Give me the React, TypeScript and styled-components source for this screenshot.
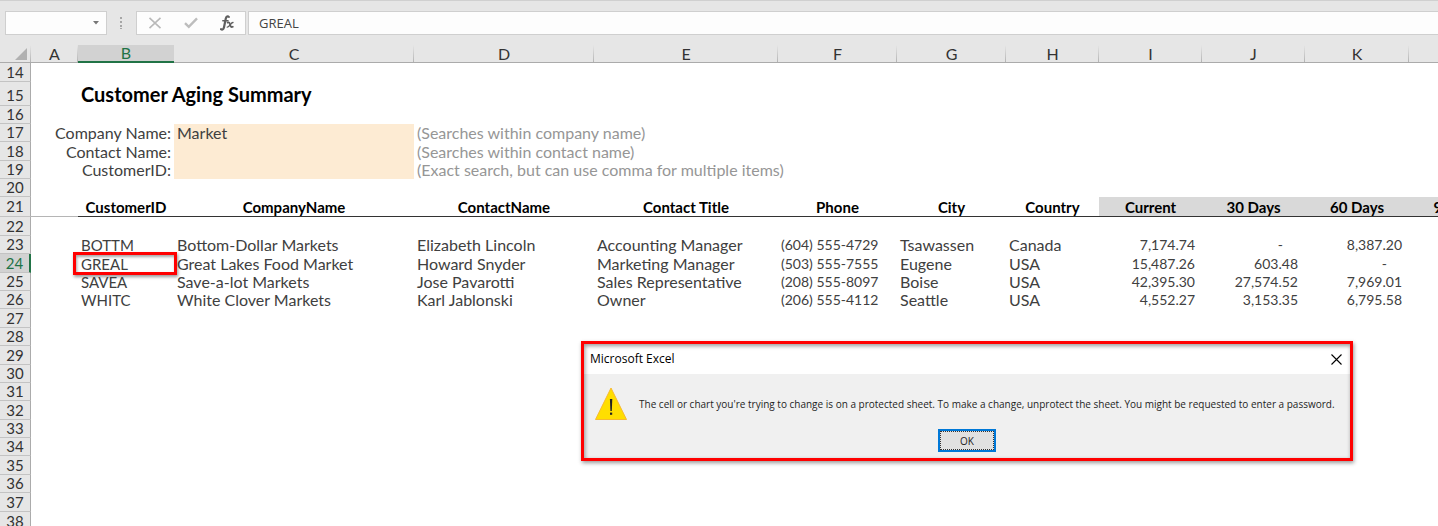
import React from "react";
import styled, { createGlobalStyle, css } from "styled-components";

const sheetFont = `"Century Gothic", Lato, "Open Sans", sans-serif`;
const uiFont = `"Segoe UI", "Open Sans", "Noto Sans", sans-serif`;

const GlobalStyle = createGlobalStyle`
  *, *::before, *::after { box-sizing: border-box; }
  body { margin: 0; background: #fff; }
`;

const Workbook = styled.main`
  display: flex;
  flex-direction: column;
  height: 100vh;
  overflow: hidden;
  background: #fff;
  font-family: ${sheetFont};
`;

const FormulaBar = styled.header`
  display: flex;
  align-items: center;
  flex: none;
  height: 45px;
  padding-left: 5px;
  background: #e6e6e6;
  border-top: 1px solid #d0d0d0;
`;

const Well = styled.div`
  display: flex;
  align-items: center;
  height: 24px;
  background: #fdfdfd;
  border: 1px solid #cfcfcf;
`;

const NameBox = styled(Well)`
  width: 102px;
`;

const BarInput = styled.input`
  flex: 1;
  min-width: 0;
  height: 22px;
  padding: 0 10px;
  border: 0;
  outline: 0;
  background: transparent;
  color: #444;
  font: 13px/20px ${uiFont};
`;

const IconButton = styled.button`
  display: flex;
  align-items: center;
  justify-content: center;
  width: 36px;
  height: 22px;
  padding: 0;
  border: 0;
  background: transparent;
`;

const NameDrop = styled(IconButton)`
  width: 20px;
`;

const Grip = styled.svg`
  width: 29px;
  height: 14px;
`;

const FormulaWell = styled(Well)`
  flex: 1;
  margin-left: 2px;
  border-right: 0;
`;

const Sheet = styled.section`
  position: relative;
  flex: 1;
`;

const Grid = styled.table`
  width: 1512px;
  table-layout: fixed;
  border-collapse: separate;
  border-spacing: 0;
  color: #404040;
  font-size: 16px;
  line-height: 18px;
`;

const Row = styled.tr<{ $h: number }>`
  height: ${(p) => p.$h}px;
`;

const ColumnHead = styled.th<{ $active?: boolean }>`
  padding: 0;
  border-bottom: 1px solid #ababab;
  background: linear-gradient(#e6e6e6, #b4b4b4) right / 1px 100% no-repeat #e6e6e6;
  color: #333;
  font-weight: 400;
  font-size: 16px;
  line-height: 16px;
  text-align: center;
  ${(p) =>
    p.$active &&
    css`
      border-bottom: 2px solid #217346;
      background: #d2d2d2;
      color: #217346;
    `}
`;

const Corner = styled(ColumnHead)`
  text-align: right;
  line-height: 0;
  padding-right: 4px;
`;

const RowHead = styled.th<{ $active?: boolean; $big?: boolean }>`
  padding: ${(p) => (p.$big ? "4px 0 0" : "0")};
  border-right: 1px solid #ababab;
  border-bottom: 1px solid #c3c3c3;
  background: #e6e6e6;
  color: #333;
  font-weight: 400;
  font-size: 15px;
  line-height: 17px;
  text-align: center;
  ${(p) =>
    p.$active &&
    css`
      border-right: 2px solid #217346;
      background: #d2d2d2;
      color: #217346;
    `}
`;

const Cell = styled.td<{ $align?: "left" | "right"; $fill?: boolean; $muted?: boolean }>`
  position: relative;
  padding: 0 3px;
  white-space: nowrap;
  text-align: ${(p) => p.$align ?? "left"};
  background: ${(p) => (p.$fill ? "#fdebd3" : "transparent")};
  color: ${(p) => (p.$muted ? "#969696" : "inherit")};
`;

const IdCell = styled(Cell)`
  font-size: 15px;
`;

const Amount = styled(Cell)<{ $dash?: boolean }>`
  padding-right: ${(p) => (p.$dash ? "22px" : "7px")};
  text-align: right;
  font-size: 14px;
`;

const Phone = styled(Cell)`
  font-size: 14px;
`;

const Title = styled.h1`
  margin: 0;
  color: #000;
  font-size: 20px;
  line-height: 24px;
  font-weight: 700;
`;

const FieldHead = styled.th<{ $shaded?: boolean }>`
  padding: 0;
  border-bottom: 1px solid #333;
  background: ${(p) => (p.$shaded ? "#d9d9d9" : "transparent")};
  color: #000;
  font-size: 15px;
  line-height: 18px;
  font-weight: 700;
  white-space: nowrap;
`;

const FreezeCell = styled.td`
  padding: 0;
  border-bottom: 1px solid #b5b5b5;
`;

const Highlight = styled.span`
  position: absolute;
  inset: -2px -3px -2px -5px;
  border: 3px solid #f00;
  box-shadow: 1px 2px 3px rgba(0, 0, 0, 0.4), inset 1px 2px 3px rgba(0, 0, 0, 0.35);
`;

const Dialog = styled.div`
  position: absolute;
  top: 296px;
  left: 581px;
  width: 772px;
  border: 3px solid #f00;
  background: #f0f0f0;
  box-shadow: 1px 2px 4px rgba(0, 0, 0, 0.4);
  color: #1e1e1e;
  font-family: ${uiFont};
  &::after {
    content: "";
    position: absolute;
    inset: 0;
    box-shadow: inset 1px 2px 4px rgba(0, 0, 0, 0.4);
    pointer-events: none;
  }
`;

const DialogBar = styled.div`
  display: flex;
  align-items: center;
  justify-content: space-between;
  height: 30px;
  padding: 0 4px 0 6px;
  background: #fff;
`;

const DialogTitle = styled.h2`
  margin: 0;
  color: #000;
  font-size: 12px;
  line-height: 16px;
  font-weight: 400;
`;

const CloseButton = styled(IconButton)`
  width: 20px;
`;

const DialogBody = styled.div`
  display: flex;
  align-items: center;
  gap: 12px;
  padding: 13px 0 9px 11px;

  svg {
    flex: none;
  }
`;

const Message = styled.p`
  margin: 0;
  font-size: 10px;
  line-height: 16px;
  white-space: nowrap;
`;

const DialogActions = styled.div`
  display: flex;
  justify-content: center;
  height: 29px;
`;

const OkButton = styled.button`
  width: 58px;
  height: 23px;
  padding: 0;
  border: 2px solid #0078d7;
  outline: 1px dotted #333;
  outline-offset: -3px;
  background: #e1e1e1;
  color: #1e1e1e;
  font: 10px/16px ${uiFont};
`;

const columns = [
  { name: "A", width: 47 },
  { name: "B", width: 96 },
  { name: "C", width: 240 },
  { name: "D", width: 180 },
  { name: "E", width: 184 },
  { name: "F", width: 119 },
  { name: "G", width: 109 },
  { name: "H", width: 93 },
  { name: "I", width: 103 },
  { name: "J", width: 103 },
  { name: "K", width: 104 },
  { name: "L", width: 103 },
];

const filters = [
  { row: 17, h: 18, label: "Company Name:", value: "Market", hint: "(Searches within company name)" },
  { row: 18, h: 19, label: "Contact Name:", value: "", hint: "(Searches within contact name)" },
  { row: 19, h: 18, label: "CustomerID:", value: "", hint: "(Exact search, but can use comma for multiple items)" },
];

const fields = ["CustomerID", "CompanyName", "ContactName", "Contact Title", "Phone", "City", "Country"];
const periods = ["Current", "30 Days", "60 Days", "90 Days"];

const customers = [
  { row: 23, h: 18, id: "BOTTM", company: "Bottom-Dollar Markets", contact: "Elizabeth Lincoln", title: "Accounting Manager", phone: "(604) 555-4729", city: "Tsawassen", country: "Canada", amounts: ["7,174.74", "-", "8,387.20"] },
  { row: 24, h: 19, id: "GREAL", company: "Great Lakes Food Market", contact: "Howard Snyder", title: "Marketing Manager", phone: "(503) 555-7555", city: "Eugene", country: "USA", amounts: ["15,487.26", "603.48", "-"] },
  { row: 25, h: 18, id: "SAVEA", company: "Save-a-lot Markets", contact: "Jose Pavarotti", title: "Sales Representative", phone: "(208) 555-8097", city: "Boise", country: "USA", amounts: ["42,395.30", "27,574.52", "7,969.01"] },
  { row: 26, h: 18, id: "WHITC", company: "White Clover Markets", contact: "Karl Jablonski", title: "Owner", phone: "(206) 555-4112", city: "Seattle", country: "USA", amounts: ["4,552.27", "3,153.35", "6,795.58"] },
];

const emptyRows = [
  [27, 19], [28, 18], [29, 19], [30, 18], [31, 18], [32, 19],
  [33, 18], [34, 18], [35, 19], [36, 18], [37, 19], [38, 19],
];

const BlankRow = ({ row, h }: { row: number; h: number }) => (
  <Row $h={h}>
    <RowHead scope="row">{row}</RowHead>
    <Cell colSpan={12} />
  </Row>
);

const CancelIcon = () => (
  <svg width="14" height="12" viewBox="0 0 14 12" fill="none" stroke="#b9b9b9" strokeWidth="1.6">
    <path d="M1.5 .8 12.5 11.2M12.5 .8 1.5 11.2" />
  </svg>
);

const CheckIcon = () => (
  <svg width="14" height="12" viewBox="0 0 14 12" fill="none" stroke="#bdbdbd" strokeWidth="2.4">
    <path d="M1 6.2 4.8 9.8 13 1.4" />
  </svg>
);

const FunctionIcon = () => (
  <svg width="14" height="16" viewBox="0 0 14 16" fill="none" stroke="#5f5f5f" strokeLinecap="round">
    <path d="M8.8 1.9C7.8.7 6.3 1.3 5.8 3.6L4 12.2C3.5 14.5 2.2 15.1 1 14.1" strokeWidth="2.2" />
    <path d="M2.8 5.8H8" strokeWidth="1.5" />
    <path d="M7.6 7.6C9 7 9.6 7.8 10 9.4 10.4 11.2 11 12.6 12.8 11.8" strokeWidth="1.8" />
    <path d="M13 7.5C11 7.2 9.5 12.6 7.2 12.1" strokeWidth="1.3" />
  </svg>
);

const WarningIcon = () => (
  <svg width="32" height="33" viewBox="0 0 32 33" aria-label="Warning" role="img">
    <path d="M16 1 31.5 32.5H.5Z" fill="#ffde00" stroke="#f7b92f" strokeWidth="1" />
    <path d="M14.9 12h2.4l-.5 12h-1.4Z" fill="#222" />
    <rect x="15" y="25.6" width="2.2" height="2.2" fill="#222" />
  </svg>
);

export default function App() {
  return (
    <Workbook>
      <GlobalStyle />
      <FormulaBar>
        <NameBox>
          <BarInput aria-label="Name box" defaultValue="" />
          <NameDrop aria-label="Show names">
            <svg width="6" height="4" viewBox="0 0 6 4" fill="#777"><path d="M0 0h6L3 3.6Z" /></svg>
          </NameDrop>
        </NameBox>
        <Grip viewBox="0 0 29 14" fill="#a6a6a6" aria-hidden="true">
          <path d="M13 1h2v2h-2zM13 5h2v2h-2zM13 9h2v2h-2zM13 12h2v1h-2z" />
        </Grip>
        <Well>
          <IconButton aria-label="Cancel"><CancelIcon /></IconButton>
          <IconButton aria-label="Enter"><CheckIcon /></IconButton>
          <IconButton aria-label="Insert function"><FunctionIcon /></IconButton>
        </Well>
        <FormulaWell>
          <BarInput aria-label="Formula" defaultValue="GREAL" />
        </FormulaWell>
      </FormulaBar>

      <Sheet>
        <Grid>
          <colgroup>
            <col width={31} />
            {columns.map((c) => <col key={c.name} width={c.width} />)}
          </colgroup>
          <thead>
            <Row $h={17}>
              <Corner aria-label="Select all">
                <svg width="12" height="12" viewBox="0 0 12 12" fill="#b1b1b1"><path d="M12 0v12H0Z" /></svg>
              </Corner>
              {columns.map((c) => (
                <ColumnHead key={c.name} scope="col" $active={c.name === "B"}>
                  {c.name === "L" ? "" : c.name}
                </ColumnHead>
              ))}
            </Row>
          </thead>
          <tbody>
            <BlankRow row={14} h={19} />
            <Row $h={24}>
              <RowHead scope="row" $big>15</RowHead>
              <Cell />
              <Cell colSpan={11}><Title>Customer Aging Summary</Title></Cell>
            </Row>
            <BlankRow row={16} h={18} />
            {filters.map((f) => (
              <Row key={f.row} $h={f.h}>
                <RowHead scope="row">{f.row}</RowHead>
                <Cell colSpan={2} $align="right">{f.label}</Cell>
                <Cell $fill>{f.value}</Cell>
                <Cell colSpan={9} $muted>{f.hint}</Cell>
              </Row>
            ))}
            <BlankRow row={20} h={18} />
            <Row $h={20}>
              <RowHead scope="row">21</RowHead>
              <FreezeCell />
              {fields.map((f) => <FieldHead key={f} scope="col">{f}</FieldHead>)}
              {periods.map((p) => <FieldHead key={p} scope="col" $shaded>{p}</FieldHead>)}
            </Row>
            <BlankRow row={22} h={19} />
            {customers.map((c) => (
              <Row key={c.row} $h={c.h}>
                <RowHead scope="row" $active={c.row === 24}>{c.row}</RowHead>
                <Cell />
                <IdCell>
                  {c.id}
                  {c.row === 24 && <Highlight />}
                </IdCell>
                <Cell>{c.company}</Cell>
                <Cell>{c.contact}</Cell>
                <Cell>{c.title}</Cell>
                <Phone>{c.phone}</Phone>
                <Cell>{c.city}</Cell>
                <Cell>{c.country}</Cell>
                {c.amounts.map((a, i) => <Amount key={i} $dash={a === "-"}>{a}</Amount>)}
                <Cell />
              </Row>
            ))}
            {emptyRows.map(([row, h]) => <BlankRow key={row} row={row} h={h} />)}
          </tbody>
        </Grid>

        <Dialog role="alertdialog" aria-labelledby="alert-title" aria-describedby="alert-text">
          <DialogBar>
            <DialogTitle id="alert-title">Microsoft Excel</DialogTitle>
            <CloseButton aria-label="Close">
              <svg width="11" height="11" viewBox="0 0 11 11" stroke="#000" strokeWidth="1.1"><path d="M.5.5l10 10M10.5.5l-10 10" /></svg>
            </CloseButton>
          </DialogBar>
          <DialogBody>
            <WarningIcon />
            <Message id="alert-text">
              The cell or chart you're trying to change is on a protected sheet. To make a change, unprotect the sheet. You might be requested to enter a password.
            </Message>
          </DialogBody>
          <DialogActions>
            <OkButton>OK</OkButton>
          </DialogActions>
        </Dialog>
      </Sheet>
    </Workbook>
  );
}
